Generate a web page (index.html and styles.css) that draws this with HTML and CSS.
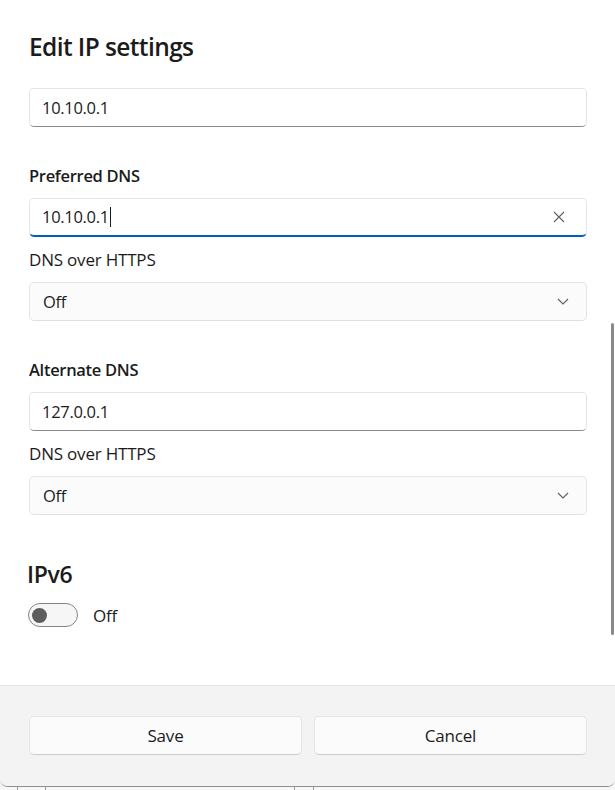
FILE: index.html
```html
<!DOCTYPE html>
<html>
<head>
<meta charset="utf-8">
<link rel="stylesheet" href="styles.css">
</head>
<body>
<div class="dialog">
  <div class="content">
    <h1 class="title">Edit IP settings</h1>
    <div class="field"><span class="value">10.10.0.1</span></div>

    <div class="label strong gap-lg">Preferred DNS</div>
    <div class="field focused">
      <span class="value">10.10.0.1</span><span class="caret"></span>
      <svg class="icon clear" width="12" height="12" viewBox="0 0 12 12"><path d="M1 1L11 11M11 1L1 11" stroke="#5f5f5f" stroke-width="1.1" fill="none"/></svg>
    </div>
    <div class="label gap-sm">DNS over HTTPS</div>
    <div class="select">
      <span class="value">Off</span>
      <svg class="icon chev" width="12" height="7" viewBox="0 0 12 7"><path d="M1 1L6 6L11 1" stroke="#5f5f5f" stroke-width="1.1" fill="none"/></svg>
    </div>

    <div class="label strong gap-lg">Alternate DNS</div>
    <div class="field"><span class="value">127.0.0.1</span></div>
    <div class="label gap-sm">DNS over HTTPS</div>
    <div class="select">
      <span class="value">Off</span>
      <svg class="icon chev" width="12" height="7" viewBox="0 0 12 7"><path d="M1 1L6 6L11 1" stroke="#5f5f5f" stroke-width="1.1" fill="none"/></svg>
    </div>

    <h2 class="section">IPv6</h2>
    <div class="toggle-row">
      <span class="toggle"><span class="knob"></span></span>
      <span class="toggle-text">Off</span>
    </div>
    <div class="scrollbar"></div>
  </div>
  <div class="footer">
    <button class="btn">Save</button>
    <button class="btn">Cancel</button>
  </div>
</div>
<div class="backdrop">
  <span class="col c1"></span><span class="col c2"></span><span class="col c3"></span><span class="col c4"></span>
</div>
</body>
</html>
```
FILE: styles.css
```css
html, body {
  margin: 0;
  padding: 0;
  background: #f3f3f3;
}
body {
  width: 615px;
  height: 790px;
  overflow: hidden;
  font-family: "Open Sans", "Noto Sans", sans-serif;
  color: #1b1b1b;
}
.dialog {
  height: 786px;
  display: flex;
  flex-direction: column;
  background: #ffffff;
  border-bottom: 1px solid #8e8e8e;
  border-radius: 0 0 8px 8px;
  overflow: hidden;
}
.content {
  flex: 1;
  position: relative;
  padding: 0 28px 0 29px;
}
.title {
  margin: 0;
  padding-top: 30px;
  font-size: 24.5px;
  line-height: 34px;
  font-weight: 600;
  letter-spacing: -0.6px;
  height: 58px;
}
.field, .select {
  box-sizing: border-box;
  height: 39px;
  border: 1px solid #e5e5e5;
  border-bottom-color: #8a8a8a;
  border-radius: 5px;
  background: #ffffff;
  display: flex;
  align-items: center;
  padding: 0 12px;
  font-size: 16.5px;
  letter-spacing: -0.3px;
  position: relative;
}
.select {
  border-bottom-color: #e0e0e0;
  background: #fbfbfb;
  padding-left: 13px;
}
.field.focused {
  border-bottom: 2px solid #005fb8;
}
.value {
  line-height: 22px;
}
.caret {
  display: inline-block;
  width: 1px;
  height: 20px;
  background: #1b1b1b;
  margin-left: 1px;
}
.icon {
  margin-left: auto;
}
.clear {
  margin-right: 9px;
}
.chev {
  margin-right: 5px;
}
.label {
  font-size: 17px;
  line-height: 22px;
  letter-spacing: -0.2px;
  margin-bottom: 11px;
}
.label.strong {
  font-weight: 600;
  font-size: 16.5px;
  letter-spacing: -0.3px;
}
.gap-lg {
  margin-top: 38px;
}
.gap-sm {
  margin-top: 12px;
}
.section {
  margin: 44px 0 0 -2px;
  font-size: 23px;
  line-height: 30px;
  font-weight: 600;
  letter-spacing: -0.3px;
}
.toggle-row {
  display: flex;
  align-items: center;
  margin-top: 14px;
  margin-left: -1px;
}
.toggle {
  box-sizing: border-box;
  width: 50px;
  height: 24px;
  border: 1px solid #858585;
  border-radius: 12px;
  background: #f6f6f6;
  display: flex;
  align-items: center;
  padding-left: 3px;
}
.knob {
  width: 15px;
  height: 15px;
  border-radius: 50%;
  background: #5d5d5d;
}
.toggle-text {
  margin-left: 15px;
  font-size: 17px;
  letter-spacing: -0.2px;
}
.scrollbar {
  position: absolute;
  right: 1px;
  top: 323px;
  width: 3px;
  height: 312px;
  border-radius: 2px;
  background: #8a8a8a;
}
.footer {
  flex: none;
  box-sizing: border-box;
  height: 101px;
  background: #f3f3f3;
  border-top: 1px solid #e5e5e5;
  padding: 30px 28px 0 29px;
  display: grid;
  grid-template-columns: 1fr 1fr;
  column-gap: 12px;
  align-items: start;
}
.btn {
  height: 39px;
  border: 1px solid #e5e5e5;
  border-bottom-color: #cccccc;
  border-radius: 5px;
  background: #fbfbfb;
  font-family: inherit;
  font-size: 17px;
  letter-spacing: -0.2px;
  color: #1b1b1b;
}
.backdrop {
  position: relative;
  height: 3px;
  background: #f7f7f7;
}
.col {
  position: absolute;
  top: 0;
  width: 1px;
  height: 3px;
  background: #9a9a9a;
}
.c1 { left: 17px; }
.c2 { left: 45px; }
.c3 { left: 294px; }
.c4 { left: 313px; }
```
